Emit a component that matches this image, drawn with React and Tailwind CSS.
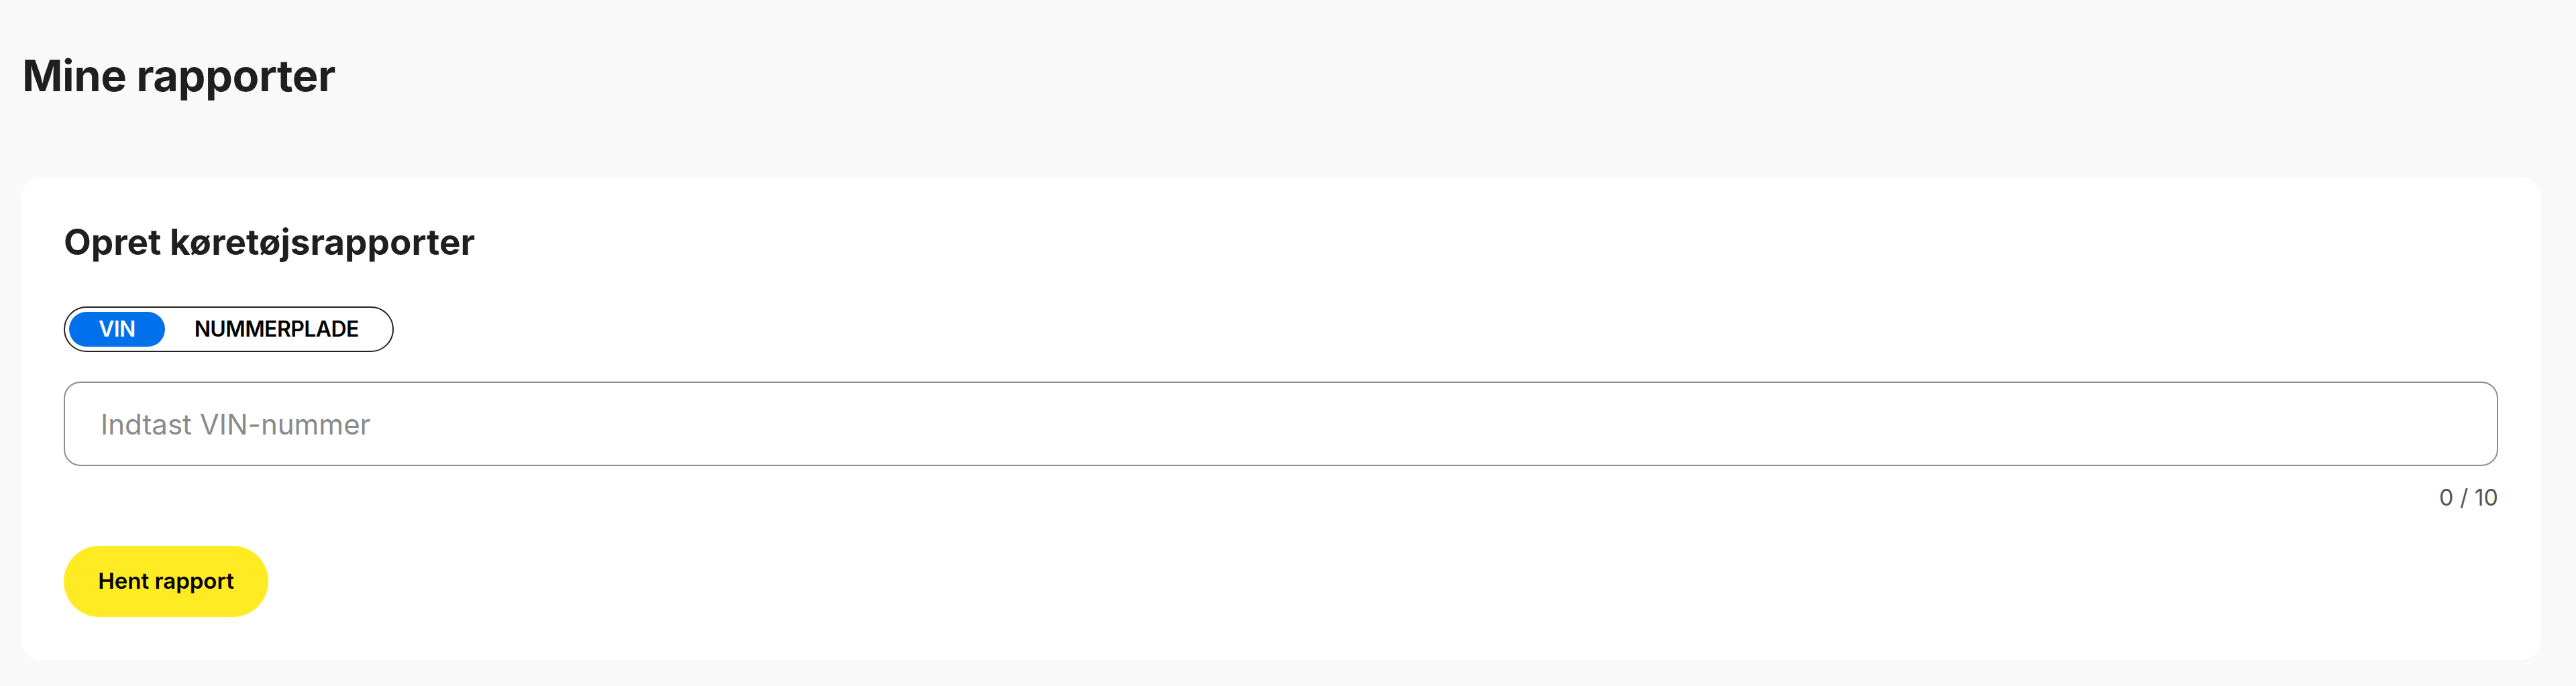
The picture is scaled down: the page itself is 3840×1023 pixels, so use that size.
import React, { useState } from "react";

const App = () => {
  const [mode, setMode] = useState("vin");
  const [value, setValue] = useState("");

  const modes = [
    { id: "vin", label: "VIN" },
    { id: "plate", label: "NUMMERPLADE" },
  ];

  return (
    <div className="min-h-screen bg-[#f9f9f9] pl-[31px] pr-[52px] pt-[80px] pb-10 font-['Inter',sans-serif] text-[#1f1f1f]">
      <h1 className="ml-[2px] text-[65px] leading-[66px] font-bold tracking-[-0.5px]">
        Mine rapporter
      </h1>

      <div className="mt-[119px] rounded-[30px] bg-white px-[64px] pt-[71px] pb-[64px]">
        <h2 className="text-[53px] leading-[50px] font-bold">
          Opret køretøjsrapporter
        </h2>

        <div className="mt-[71px] inline-flex rounded-full border-2 border-[#222] p-[6px]">
          {modes.map((m) => (
            <button
              key={m.id}
              onClick={() => setMode(m.id)}
              className={`h-[52px] rounded-full px-[44px] text-[32px] leading-[52px] font-semibold tracking-[-0.6px] ${
                mode === m.id ? "bg-[#0071eb] text-white font-medium" : "text-black"
              }`}
            >
              {m.label}
            </button>
          ))}
        </div>

        <input
          value={value}
          maxLength={10}
          onChange={(e) => setValue(e.target.value)}
          placeholder={mode === "vin" ? "Indtast VIN-nummer" : "Indtast nummerplade"}
          className="mt-[44px] block h-[126px] w-full rounded-[25px] border-2 border-[#8e8e8e] px-[53px] text-[42px] text-[#1f1f1f] outline-none placeholder:text-[#8a8a8a]"
        />
        <p className="mt-[30px] text-right text-[34px] leading-[34px] text-[#555]">
          {value.length} / 10
        </p>

        <button className="mt-[55px] h-[106px] w-[305px] rounded-full bg-[#ffeb23] text-[33px] font-semibold text-black">
          Hent rapport
        </button>
      </div>
    </div>
  );
};

export default App;
